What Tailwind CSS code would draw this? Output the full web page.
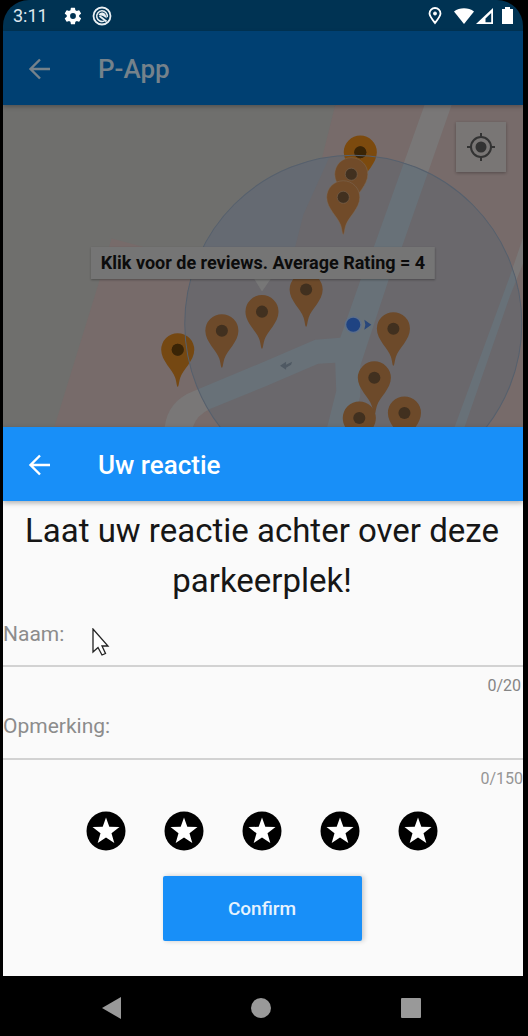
<!DOCTYPE html>
<html lang="nl">
<head>
<meta charset="utf-8">
<meta name="viewport" content="width=device-width, initial-scale=1">
<title>P-App</title>
<script src="https://cdn.jsdelivr.net/npm/@tailwindcss/browser@4"></script>
</head>
<body class="bg-black font-['Roboto',sans-serif]">
<div class="flex min-h-screen flex-col pr-[5px] pl-[3px]">
<div class="relative flex flex-1 flex-col overflow-hidden rounded-[26px] bg-black">

  <!-- Status bar -->
  <div class="flex h-[31px] shrink-0 items-center bg-[#003353] pr-[10px] pl-[10px] text-white">
    <span class="text-[18px] leading-6 text-[#dfe8ee]">3:11</span>
    <svg class="ml-[15px] size-5" viewBox="0 0 24 24" fill="#fff" aria-hidden="true"><path d="M19.4 13a7.5 7.5 0 0 0 0-2l2.1-1.6a.5.5 0 0 0 .1-.6l-2-3.5a.5.5 0 0 0-.6-.2l-2.500 1a7.300 7.300 0 0 0-1.700-1l-.4-2.600A.5.5 0 0 0 13.900 2h-4a.5.5 0 0 0-.5.4L9 5.100a7.700 7.700 0 0 0-1.700 1l-2.500-1a.5.5 0 0 0-.6.200l-2 3.500a.5.5 0 0 0 .1.600L4.500 11a7.500 7.500 0 0 0 0 2l-2.200 1.600a.5.5 0 0 0-.1.600l2 3.500c.1.200.4.300.6.200l2.500-1a7.300 7.300 0 0 0 1.700 1l.4 2.700c0 .2.200.4.500.4h4c.2 0 .5-.2.500-.4l.4-2.700a7.700 7.700 0 0 0 1.700-1l2.500 1c.2.100.5 0 .6-.2l2-3.500a.5.5 0 0 0-.1-.6zM12 15.500a3.500 3.500 0 1 1 0-7 3.500 3.500 0 0 1 0 7z"/></svg>
    <svg class="ml-[9px] size-5" viewBox="0 0 20 20" fill="none" stroke="#e8eef2" aria-hidden="true"><circle cx="10" cy="10" r="8.500" stroke-width="1.800"/><path d="M12.500 14.800a5.300 5.300 0 1 1 2.700-3.600" stroke-width="1.500"/><path d="M6.500 9c1-3 5-3.500 7-.5l1.500 4-4-2.500z" fill="#e8eef2" stroke="none"/><path d="m7.500 10 7 5.500" stroke-width="1.800"/></svg>
    <span class="flex-1"></span>
    <svg class="h-[18px] w-[14px]" viewBox="0 0 14 18" fill="none" stroke="#fff" stroke-width="1.800" aria-hidden="true"><path d="M7 16C3.500 11.500 1.500 9 1.500 6.500a5.500 5.500 0 0 1 11 0C12.500 9 10.500 11.500 7 16z"/><circle cx="7" cy="6.500" r="1.500" fill="#fff" stroke-width="1"/></svg>
    <svg class="ml-3 h-4 w-5" viewBox="0 0 20 16" fill="#fff" aria-hidden="true"><path d="M10 16 0 3.500C5.500-.8 14.500-.8 20 3.500z"/></svg>
    <svg class="ml-[2px] h-4 w-[17px]" viewBox="0 0 17 16" aria-hidden="true"><path fill="#fff" fill-rule="evenodd" d="M17 0v16H0zM15.200 5 9.500 10.500v3.800h5.700z"/></svg>
    <svg class="ml-[9px] h-[17px] w-[11px]" viewBox="0 0 11 17" fill="#fff" aria-hidden="true"><path d="M3 0h5v2h3v15H0V2h3z"/></svg>
  </div>

  <!-- Main app bar, dimmed behind the sheet -->
  <header class="relative z-10 flex h-[74px] shrink-0 items-center bg-[#004072] pt-[2px] pl-6 shadow-[0_2px_4px_rgba(0,0,0,0.25)]">
    <button type="button" aria-label="Terug" class="text-[#75828b]">
      <svg class="size-[26px]" viewBox="0 0 26 26" fill="none" stroke="currentColor" stroke-width="2.400"><path d="M23 13H4M13 3.500 3.500 13l9.500 9.500"/></svg>
    </button>
    <h1 class="ml-[45px] text-[26px] leading-8 font-medium text-[#75828b]">P-App</h1>
  </header>

  <!-- Map -->
  <section class="relative min-h-[321px] flex-1 overflow-hidden bg-[#6f6f6d]">
    <svg class="absolute inset-0 size-full" viewBox="3 105 520 321" preserveAspectRatio="xMidYMid slice" aria-hidden="true">
      <defs>
        <g id="pin"><path d="M0 37C-1 37-1 33-2.500 28-5 20-16.500 11-16.500 0a16.500 16.500 0 0 1 33 0C16.500 11 5 20 2.500 28 1 33 1 37 0 37z"/><circle r="6" fill="#41301f"/></g>
        <g id="roads">
          <path d="M424 105h27l-49 140-14 35-28 85v30l-9 31h-24l9-36-1-28-17 1-54 23-54 22q-13 6-17 18h-28q3-26 29-36l70-29 51-22 25-2 20-57 14-35z"/>
          <path d="M523 235v26l-14 35-45 130h-10l55-150z"/>
        </g>
        <clipPath id="area"><circle cx="353" cy="323" r="168"/></clipPath>
      </defs>
      <path fill="#6f6f6d" d="M3 105h520v321H3z"/>
      <path fill="#776b6a" d="M335 105h188v321H55l45-146 12-42 34 9 144 20 13-52 17-50z"/>
      <use href="#roads" fill="#797777"/>
      <g clip-path="url(#area)">
        <path fill="#656a72" d="M185 155h338v271H185z"/>
        <path fill="#6a686c" d="M330 155h193v271H185V262l105 5 13-52z"/>
        <use href="#roads" fill="#687178"/>
      </g>
      <use href="#pin" x="360" y="152" fill="#7c4a0e"/>
      <use href="#pin" x="178" y="349" fill="#754812"/>
      <circle cx="360" cy="152" r="6" fill="#3a2405"/><circle cx="178" cy="349" r="6" fill="#3a2405"/>
      <circle cx="353" cy="323" r="168" fill="none" stroke="#56606d"/>
      <path d="m280 365 6-4v3l6-3-1 3-5 3v2z" fill="#4f5963"/>
      <g fill="#714b29" stroke="#7d6b59" stroke-width=".5">
        <use href="#pin" x="351" y="174"/>
        <use href="#pin" x="343" y="197"/>
      </g>
      <g fill="#6d4a2a">
        <use href="#pin" x="306" y="289"/>
        <use href="#pin" x="262" y="311"/>
        <use href="#pin" x="222" y="330"/>
        <use href="#pin" x="393" y="328"/>
        <use href="#pin" x="374" y="377"/>
        <use href="#pin" x="359" y="417"/>
        <use href="#pin" x="404" y="412"/>
      </g>
      <circle cx="353" cy="324" r="8.500" fill="#5d6f8a"/><circle cx="353" cy="324" r="7" fill="#1f4382"/>
      <path d="m364 319 7 5-7 5 1-5z" fill="#29477b"/>
      <path d="M254 278h17l-9 13z" fill="#777"/>
    </svg>
    <button type="button" class="absolute top-[142px] left-1/2 h-8 -translate-x-1/2 bg-[#757575] px-[10px] text-[18px] leading-8 font-bold whitespace-nowrap text-[#0c0c0c] shadow-[0_1px_2px_rgba(0,0,0,0.3)]">Klik voor de reviews. Average Rating = 4</button>
    <button type="button" aria-label="Mijn locatie" class="absolute top-[17px] right-[17px] flex size-[50px] items-center justify-center bg-[#797675] shadow-[0_1px_3px_rgba(0,0,0,0.3)]">
      <svg class="size-7" viewBox="0 0 28 28" fill="none" stroke="#333" stroke-width="2"><circle cx="14" cy="14" r="10"/><circle cx="14" cy="14" r="5.500" fill="#333" stroke="none"/><path d="M14 0v4M14 24v4M0 14h4M24 14h4"/></svg>
    </button>
  </section>

  <!-- Review sheet -->
  <main class="relative shrink-0 bg-[#fafafa] pb-[35px]">
    <header class="flex h-[74px] items-center bg-[#188ff8] pt-[2px] pl-6 shadow-[0_2px_5px_rgba(0,0,0,0.3)]">
      <button type="button" aria-label="Sluiten" class="text-white">
        <svg class="size-[26px]" viewBox="0 0 26 26" fill="none" stroke="currentColor" stroke-width="2.400"><path d="M23 13H4M13 3.500 3.500 13l9.500 9.500"/></svg>
      </button>
      <h2 class="ml-[45px] text-[26px] leading-8 font-medium text-white">Uw reactie</h2>
    </header>
    <form>
      <p class="pt-[5px] pr-[17px] pl-[15px] text-center text-[33px] leading-[50px] text-[#161616]">Laat uw reactie achter over deze parkeerplek!</p>
      <div class="flex h-[61px] items-center border-b-2 border-[#d2d2d2] pb-1">
        <label for="naam" class="text-[21px] leading-6 text-[#8c8c8c]">Naam:</label>
        <input id="naam" type="text" maxlength="20" class="h-10 min-w-0 flex-1 bg-transparent px-2 text-[21px] outline-none">
      </div>
      <p class="pt-[7px] pr-[2px] text-right text-[16px] leading-6 text-[#858585]">0/20</p>
      <div class="flex h-[62px] items-center border-b-2 border-[#d2d2d2] pb-1">
        <label for="opmerking" class="text-[21px] leading-6 text-[#8c8c8c]">Opmerking:</label>
        <input id="opmerking" type="text" maxlength="150" class="h-10 min-w-0 flex-1 bg-transparent px-2 text-[21px] outline-none">
      </div>
      <p class="pt-[7px] text-right text-[16px] leading-6 text-[#959595]">0/150</p>

      <svg class="hidden" aria-hidden="true"><symbol id="star" viewBox="0 0 40 40"><circle cx="20" cy="20" r="19.500" fill="#000"/><path fill="#fff" d="m20 6.500 3.300 9.200 10.200.4-8 6.200 2.800 9.700L20 26.400 11.700 32l2.800-9.700-8-6.200 10.200-.4z"/></symbol></svg>
      <div class="mt-5 flex justify-center gap-[38px] pr-[2px]">
        <button type="button" aria-label="1 ster" class="size-10"><svg class="size-10"><use href="#star"/></svg></button>
        <button type="button" aria-label="2 sterren" class="size-10"><svg class="size-10"><use href="#star"/></svg></button>
        <button type="button" aria-label="3 sterren" class="size-10"><svg class="size-10"><use href="#star"/></svg></button>
        <button type="button" aria-label="4 sterren" class="size-10"><svg class="size-10"><use href="#star"/></svg></button>
        <button type="button" aria-label="5 sterren" class="size-10"><svg class="size-10"><use href="#star"/></svg></button>
      </div>
      <div class="mt-[25px] flex justify-center pr-[2px]">
        <button type="submit" class="h-[65px] w-[199px] rounded-[2px] bg-[#188ff8] pt-[2px] text-[19px] font-medium text-[#e6f3fe] shadow-[2px_0_5px_rgba(0,0,0,0.2)]">Confirm</button>
      </div>
    </form>
    <svg class="pointer-events-none absolute top-[201px] left-[88px] h-[29px] w-[19px]" viewBox="0 0 19 29" fill="#fff" stroke="#222" stroke-width="1.300" aria-hidden="true"><path d="M2 1v23l5-4.500L11 27l3.500-1.500L11 18h6z"/></svg>
  </main>

  <!-- System navigation -->
  <nav class="flex h-[60px] shrink-0 items-center justify-around bg-black pt-1 pr-[37px] pl-[34px] text-[#999]">
    <button type="button" aria-label="Vorige"><svg class="h-[22px] w-5" viewBox="0 0 20 22" fill="currentColor"><path d="M19 0v22L0 11z"/></svg></button>
    <button type="button" aria-label="Start"><svg class="size-5" viewBox="0 0 20 20" fill="currentColor"><circle cx="10" cy="10" r="10"/></svg></button>
    <button type="button" aria-label="Overzicht"><svg class="size-5" viewBox="0 0 20 20" fill="currentColor"><rect width="20" height="20" rx="1"/></svg></button>
  </nav>
</div>
</div>
</body>
</html>
